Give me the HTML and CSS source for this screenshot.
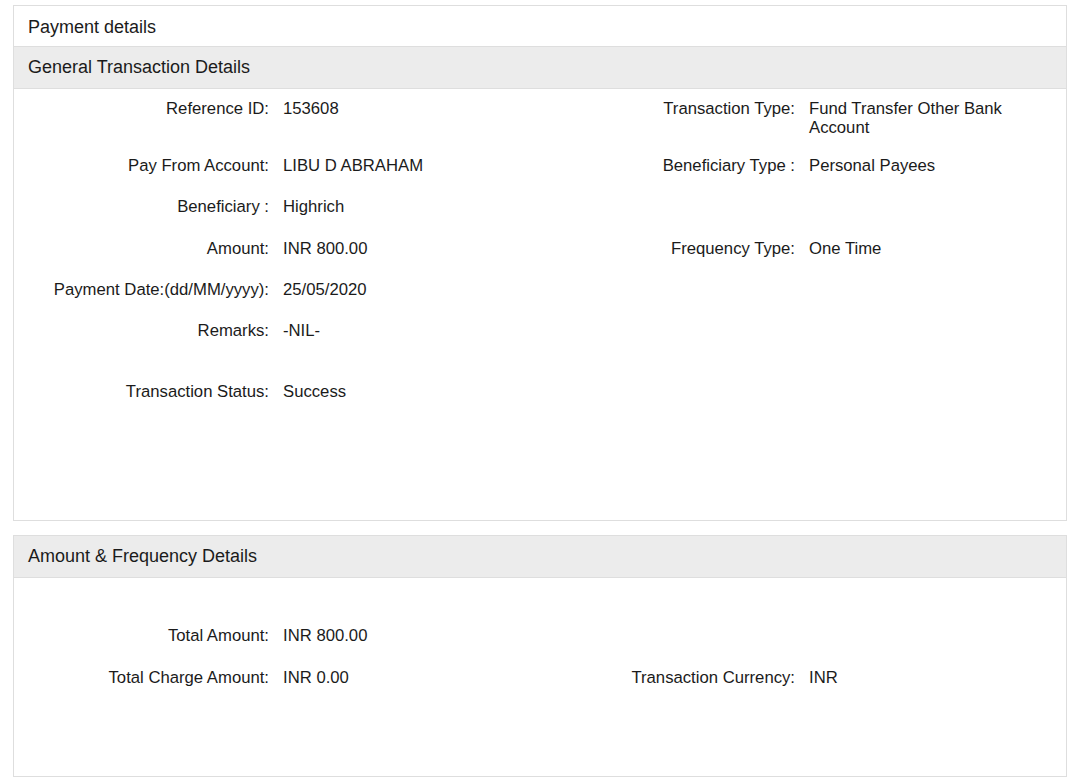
FILE: index.html
```html
<!DOCTYPE html>
<html>
<head>
<meta charset="utf-8">
<link rel="stylesheet" href="styles.css">
</head>
<body>
<div class="page">
  <div class="panel">
    <div class="panel-title">Payment details</div>
    <div class="section-head">General Transaction Details</div>
    <div class="panel-body body-general">
      <div class="row row-first">
        <div class="field"><div class="label">Reference ID:</div><div class="value">153608</div></div>
        <div class="field"><div class="label">Transaction Type:</div><div class="value">Fund Transfer Other Bank Account</div></div>
      </div>
      <div class="row">
        <div class="field"><div class="label">Pay From Account:</div><div class="value">LIBU D ABRAHAM</div></div>
        <div class="field"><div class="label">Beneficiary Type :</div><div class="value">Personal Payees</div></div>
      </div>
      <div class="row row-tall">
        <div class="field"><div class="label">Beneficiary :</div><div class="value">Highrich</div></div>
        <div class="field"></div>
      </div>
      <div class="row">
        <div class="field"><div class="label">Amount:</div><div class="value">INR 800.00</div></div>
        <div class="field"><div class="label">Frequency Type:</div><div class="value">One Time</div></div>
      </div>
      <div class="row">
        <div class="field"><div class="label">Payment Date:(dd/MM/yyyy):</div><div class="value">25/05/2020</div></div>
        <div class="field"></div>
      </div>
      <div class="row row-spaced">
        <div class="field"><div class="label">Remarks:</div><div class="value">-NIL-</div></div>
        <div class="field"></div>
      </div>
      <div class="row">
        <div class="field"><div class="label">Transaction Status:</div><div class="value">Success</div></div>
        <div class="field"></div>
      </div>
    </div>
  </div>

  <div class="panel panel-second">
    <div class="section-head">Amount &amp; Frequency Details</div>
    <div class="panel-body body-amount">
      <div class="row">
        <div class="field"><div class="label">Total Amount:</div><div class="value">INR 800.00</div></div>
        <div class="field"></div>
      </div>
      <div class="row">
        <div class="field"><div class="label">Total Charge Amount:</div><div class="value">INR 0.00</div></div>
        <div class="field"><div class="label">Transaction Currency:</div><div class="value">INR</div></div>
      </div>
    </div>
  </div>
</div>
</body>
</html>
```
FILE: styles.css
```css
* { box-sizing: border-box; }
html, body { margin: 0; padding: 0; background: #fff; }
body {
  font-family: "Liberation Sans", Arial, sans-serif;
  font-size: 16.7px;
  color: #1b1b1b;
}
.page {
  padding: 5px 13px 0 13px;
  width: 1080px;
}
.panel {
  width: 1054px;
  border: 1px solid #dedede;
  background: #fff;
}
.panel-second {
  margin-top: 14px;
}
.panel-title {
  height: 41px;
  line-height: 42px;
  font-size: 18px;
  padding-left: 14px;
  border-bottom: 1px solid #dedede;
}
.section-head {
  height: 42px;
  line-height: 41px;
  font-size: 18px;
  padding-left: 14px;
  background: #ececec;
  border-bottom: 1px solid #dedede;
}
.panel-body {
  display: flex;
  flex-direction: column;
}
.body-general {
  height: 431px;
  padding-top: 10px;
}
.body-amount {
  height: 198px;
  padding-top: 48px;
}
.row {
  display: grid;
  grid-template-columns: 1fr 1fr;
  line-height: 19px;
  margin-bottom: 22px;
}
.row-first { margin-bottom: 19px; }
.row-tall { margin-bottom: 23px; }
.body-amount .row { margin-bottom: 23px; }
.row-spaced { margin-bottom: 42px; }
.field {
  display: flex;
  align-items: flex-start;
}
.label {
  width: 255px;
  flex: none;
  text-align: right;
  margin-right: 14px;
}
.value {
  width: 240px;
}
```
